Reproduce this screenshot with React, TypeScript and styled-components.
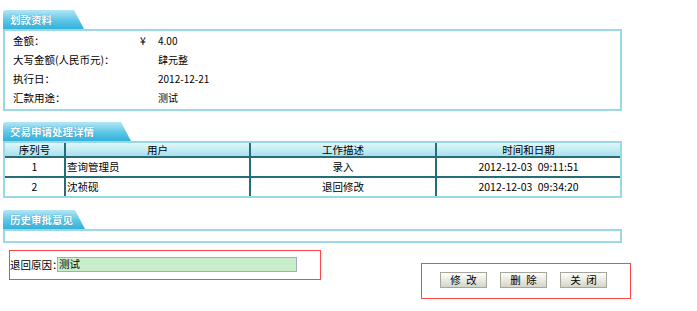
import React from "react";
import styled, { createGlobalStyle } from "styled-components";

const GlobalStyle = createGlobalStyle`
  html, body {
    margin: 0;
    padding: 0;
    background: #fff;
  }
  body {
    font-family: "Noto Sans CJK SC", "Noto Sans", sans-serif;
    font-size: 10.5px;
    color: #000;
  }
`;

const details = [
  { label: "金额：", currency: "¥", value: "4.00" },
  { label: "大写金额(人民币元)：", value: "肆元整" },
  { label: "执行日：", value: "2012-12-21" },
  { label: "汇款用途：", value: "测试" },
];

const steps = [
  { no: 1, user: "查询管理员", action: "录入", time: "2012-12-03 09:11:51" },
  { no: 2, user: "沈祯砚", action: "退回修改", time: "2012-12-03 09:34:20" },
];

function App() {
  return (
    <>
      <GlobalStyle />
      <Page>
        <Section $gap={11}>
          <Tab $w={81}>划款资料</Tab>
          <Panel>
            {details.map((d) => (
              <DetailRow key={d.label}>
                <Label>{d.label}</Label>
                <Currency>{d.currency}</Currency>
                <Value>{d.value}</Value>
              </DetailRow>
            ))}
          </Panel>
        </Section>

        <Section $gap={12}>
          <Tab $w={128}>交易申请处理详情</Tab>
          <Table>
            <thead>
              <tr>
                <Th $w={61}>序列号</Th>
                <Th $w={185}>用户</Th>
                <Th $w={186}>工作描述</Th>
                <Th $w={183}>时间和日期</Th>
              </tr>
            </thead>
            <tbody>
              {steps.map((s) => (
                <tr key={s.no}>
                  <Td>{s.no}</Td>
                  <Td $left>{s.user}</Td>
                  <Td>{s.action}</Td>
                  <Td $mono>{s.time}</Td>
                </tr>
              ))}
            </tbody>
          </Table>
        </Section>

        <Section $gap={7}>
          <Tab $w={82}>历史审批意见</Tab>
          <EmptyPanel />
        </Section>

        <Bottom>
          <ReasonBox>
            <ReasonLabel>退回原因：</ReasonLabel>
            <ReasonField>测试</ReasonField>
          </ReasonBox>
          <ButtonBox>
            <Button>修 改</Button>
            <Button>删 除</Button>
            <Button>关 闭</Button>
          </ButtonBox>
        </Bottom>
      </Page>
    </>
  );
}

export default App;

const Page = styled.div`
  width: 619px;
  padding: 10px 0 0 3px;
`;

const Section = styled.section<{ $gap: number }>`
  margin-bottom: ${(p) => p.$gap}px;
`;

const Tab = styled.div<{ $w: number }>`
  width: ${(p) => p.$w}px;
  height: 19px;
  box-sizing: border-box;
  padding-left: 7px;
  line-height: 19px;
  color: #fff;
  font-weight: bold;
  background: linear-gradient(#b3e7f5, #5cc6e6 55%, #33b1da);
  clip-path: polygon(0 0, calc(100% - 10px) 0, 100% 100%, 0 100%);
  border-top-left-radius: 3px;
  text-shadow: 0 0 1px #1b7fa8;
`;

const Panel = styled.div`
  border: 2px solid #9ad8e8;
  padding-bottom: 2px;
`;

const DetailRow = styled.div`
  display: flex;
  align-items: center;
  height: 19px;
  padding-left: 8px;
`;

const Label = styled.span`
  width: 127px;
`;

const Currency = styled.span`
  width: 18px;
`;

const Value = styled.span`
  font-size: 10px;
`;

const Table = styled.table`
  width: 619px;
  border-collapse: separate;
  border-spacing: 0;
  table-layout: fixed;
  border: 2px solid #9ad8e8;
`;

const Th = styled.th<{ $w: number }>`
  width: ${(p) => p.$w}px;
  box-sizing: border-box;
  padding: 0;
  line-height: 13px;
  font-weight: normal;
  text-align: center;
  background: linear-gradient(#e2f7fb, #a8e1ee);
  border-bottom: 2px solid #276c7a;
  &:not(:last-child) {
    border-right: 2px solid #276c7a;
  }
`;

const Td = styled.td<{ $left?: boolean; $mono?: boolean }>`
  padding: 0 0 0 ${(p) => (p.$left ? "1px" : "0")};
  line-height: 18px;
  text-align: ${(p) => (p.$left ? "left" : "center")};
  white-space: pre;
  word-spacing: ${(p) => (p.$mono ? "3px" : "0")};
  &:not(:last-child) {
    border-right: 2px solid #276c7a;
  }
  tr:not(:last-child) > & {
    border-bottom: 2px solid #276c7a;
  }
`;

const EmptyPanel = styled.div`
  height: 10px;
  border: 2px solid #9ad8e8;
`;

const Bottom = styled.div`
  display: flex;
  align-items: flex-start;
`;

const ReasonBox = styled.div`
  display: flex;
  flex-shrink: 0;
  align-items: center;
  width: 312px;
  height: 30px;
  box-sizing: border-box;
  margin-left: 6px;
  padding-bottom: 2px;
  border: 1px solid #ff4646;
`;

const ReasonLabel = styled.span`
  width: 47px;
  font-feature-settings: "halt";
  white-space: nowrap;
`;

const ReasonField = styled.div`
  width: 240px;
  height: 15px;
  box-sizing: border-box;
  padding-left: 1px;
  line-height: 11px;
  border: 1px solid #a4abc4;
  background: #c8edc9;
`;

const ButtonBox = styled.div`
  display: flex;
  flex-shrink: 0;
  gap: 13px;
  width: 210px;
  height: 36px;
  box-sizing: border-box;
  margin: 13px 0 0 100px;
  padding: 8px 0 0 18px;
  border: 1px solid #ff4646;
`;

const Button = styled.button`
  width: 47px;
  height: 16px;
  padding: 0;
  font-family: inherit;
  font-size: 10.5px;
  line-height: 14px;
  word-spacing: 3px;
  color: #000;
  border: 1px solid #a6a69c;
  background: linear-gradient(#fdfdfb, #e6e6de 60%, #d4d4cb);
`;
